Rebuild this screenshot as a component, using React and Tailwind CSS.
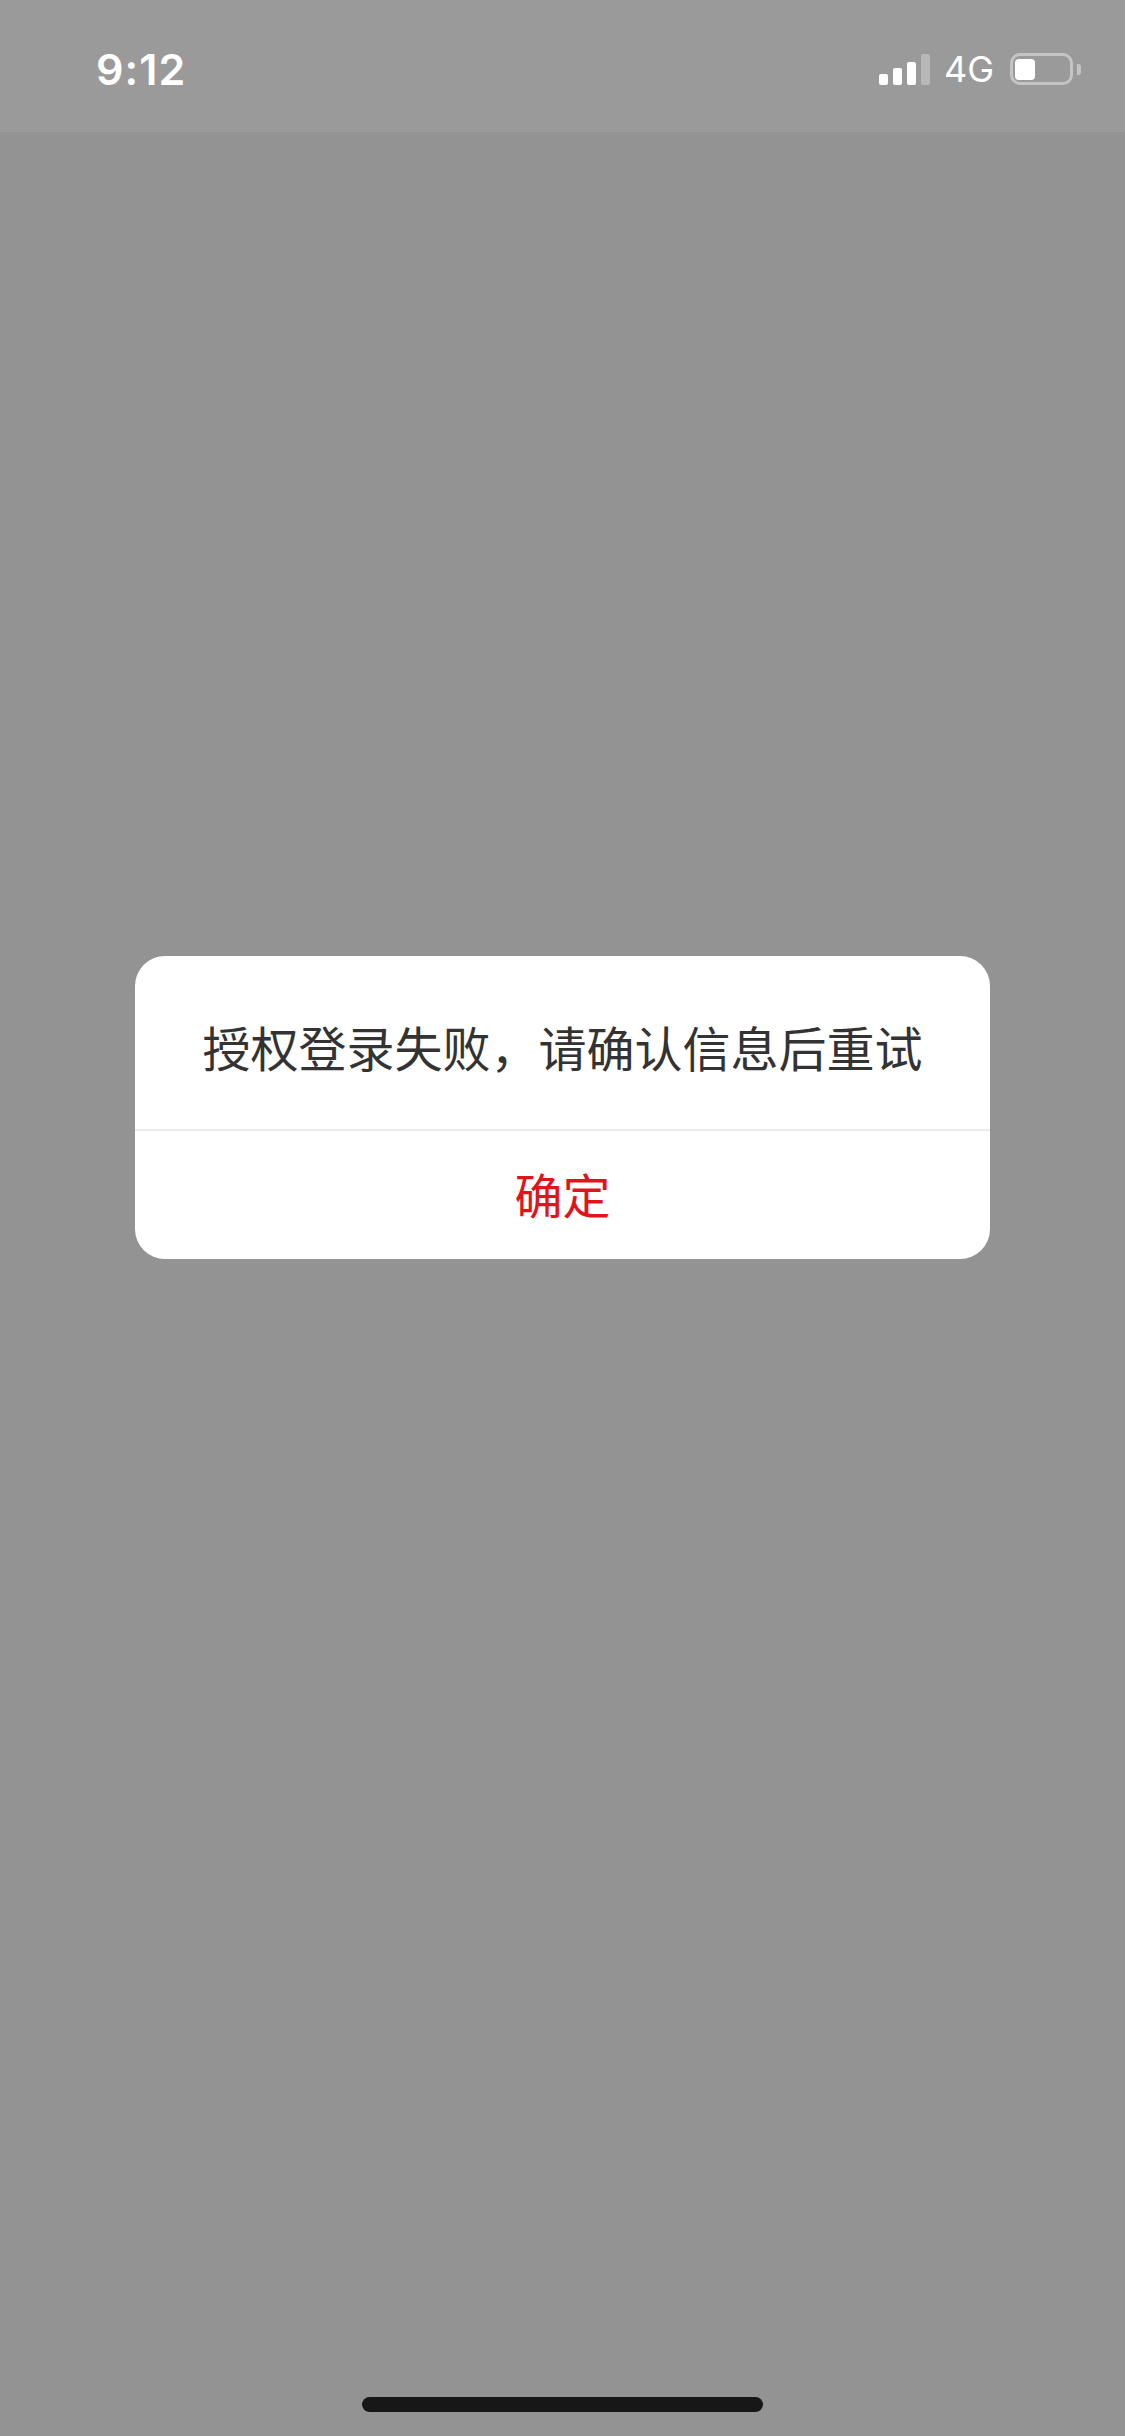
export default function App() {
  return (
    <div className="w-[1125px] h-[2436px] bg-[#939393] flex flex-col" style={{ fontFamily: 'Inter, "Noto Sans CJK SC", sans-serif' }}>
      <div className="h-[132px] bg-[#9a9a9a] flex items-center justify-between pt-[6px] pl-[96px] pr-[44px]">
        <span className="text-[43px] font-semibold text-white leading-none tracking-[1px]" style={{ fontFamily: 'Inter, sans-serif' }}>9:12</span>
        <div className="flex items-center">
          <div className="flex items-end gap-[5px] h-[31px]">
            <div className="w-[9px] h-[11px] rounded-[2px] bg-white"></div>
            <div className="w-[9px] h-[17px] rounded-[2px] bg-white"></div>
            <div className="w-[9px] h-[23px] rounded-[2px] bg-white"></div>
            <div className="w-[9px] h-[31px] rounded-[2px] bg-[#b8b8b8]"></div>
          </div>
          <span className="ml-[14px] text-[36px] text-white leading-none font-normal" style={{ fontFamily: 'Inter, sans-serif' }}>4G</span>
          <div className="ml-[16px] flex items-center">
            <div className="w-[63px] h-[32px] rounded-[10px] border-[3px] border-[#c4c4c4] p-[2px] flex items-center">
              <div className="w-[20px] h-[21px] rounded-[4px] bg-white"></div>
            </div>
            <div className="ml-[4px] w-[4px] h-[11px] rounded-r-[3px] bg-[#c4c4c4]"></div>
          </div>
        </div>
      </div>
      <div className="mt-[824px] mx-auto w-[855px] bg-white rounded-[30px] overflow-hidden" style={{ fontFamily: '"Noto Sans CJK SC", sans-serif' }}>
        <div className="h-[173px] flex items-center justify-center pt-[6px]">
          <span className="text-[48px] text-[#333333] leading-none">授权登录失败，请确认信息后重试</span>
        </div>
        <div className="h-[2px] bg-[#ebebeb]"></div>
        <div className="h-[128px] flex items-center justify-center pb-[4px]">
          <span className="text-[48px] text-[#e3131c] leading-none">确定</span>
        </div>
      </div>
      <div className="mt-auto mb-[24px] mx-auto w-[401px] h-[15px] rounded-full bg-[#171717]"></div>
    </div>
  );
}
